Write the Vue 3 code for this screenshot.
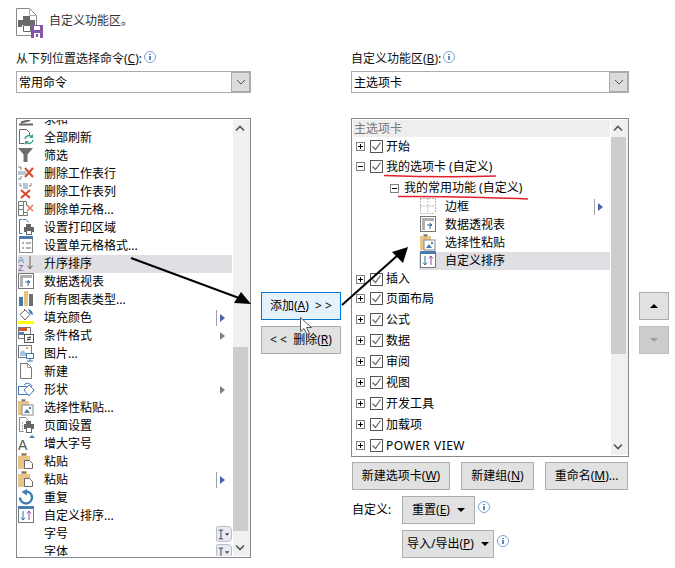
<template>
  <div class="page">
    <div class="header">
      <svg class="header-icon" width="27" height="30" viewBox="0 0 27 30">
        <path d="M.5.500h13l7 7v12M.5.500v27h15" fill="#fff" stroke="#8a8a8a" />
        <path d="M13.500.5v7h7" fill="none" stroke="#b0b0b0" />
        <path d="M7 8h7v4H7zM2 12h17v7h-3v-2H6v2H2z" fill="#6a6a6a" />
        <path d="M7.500 17.500h7v6h-7z" fill="#fff" stroke="#6a6a6a" />
        <rect x="15" y="17" width="12" height="13" fill="#8457ab" />
        <rect x="18" y="18" width="6" height="4" fill="#fff" />
        <rect x="18" y="25" width="6" height="5" fill="#fff" />
        <rect x="20" y="26" width="2" height="3" fill="#8457ab" />
      </svg>
      <span class="header-text">自定义功能区。</span>
    </div>

    <div class="columns">
      <div class="col-left">
        <div class="label">从下列位置选择命令(<u>C</u>):<i class="info"></i></div>
        <div class="select">
          <span>常用命令</span>
          <span class="select-btn"><svg width="10" height="6" viewBox="0 0 10 6"><path d="M1 1l4 4 4-4" fill="none" stroke="#555" /></svg></span>
        </div>
        <div class="list list-commands">
          <div class="list-body">
            <div class="commands">
              <div v-for="item in commands" :key="item.label + item.mark" class="cmd" :class="{ active: item.active }">
                <svg class="cmd-icon" width="18" height="18" viewBox="0 0 18 18" v-html="icons[item.icon]"></svg>
                <span class="cmd-text">{{ item.label }}</span>
                <span v-if="item.mark === 'split'" class="mark-split"><b class="tri blue"></b></span>
                <span v-if="item.mark === 'arrow'" class="mark-arrow"><b class="tri"></b></span>
                <span v-if="item.mark === 'combo'" class="mark-combo">
                  <svg width="16" height="15" viewBox="0 0 16 15">
                    <path d="M2 2.500h5M2 12.500h5M4.500 2.500v10" fill="none" stroke="#333" />
                    <path d="M9 6h5l-2.500 3z" fill="#444" />
                  </svg>
                </span>
              </div>
            </div>
          </div>
          <div class="scroll">
            <svg class="scroll-arrow" width="10" height="7" viewBox="0 0 10 7"><path d="M1 5.500l4-4 4 4" fill="none" stroke="#555" stroke-width="1.600" /></svg>
            <div class="scroll-track"><div class="thumb left-thumb"></div></div>
            <svg class="scroll-arrow" width="10" height="7" viewBox="0 0 10 7"><path d="M1 1.500l4 4 4-4" fill="none" stroke="#555" stroke-width="1.600" /></svg>
          </div>
        </div>
      </div>

      <div class="col-mid">
        <button class="btn btn-mid primary">添加(<u>A</u>)&nbsp;&nbsp;&gt; &gt;</button>
        <button class="btn btn-mid">&lt; &lt;&nbsp;&nbsp;删除(<u>R</u>)</button>
      </div>

      <div class="col-right">
        <div class="label">自定义功能区(<u>B</u>):<i class="info"></i></div>
        <div class="select">
          <span>主选项卡</span>
          <span class="select-btn"><svg width="10" height="6" viewBox="0 0 10 6"><path d="M1 1l4 4 4-4" fill="none" stroke="#555" /></svg></span>
        </div>
        <div class="list list-tabs">
          <div class="list-body">
            <div class="tree-head">主选项卡</div>
            <div v-for="node in tree" :key="node.label + node.h" class="node" :class="[node.kind, { active: node.active }]" :style="{ height: node.h + 'px' }">
              <template v-if="node.kind === 'tab'">
                <span class="expander" :class="{ open: node.open }"></span>
                <span class="check"><svg width="11" height="11" viewBox="0 0 11 11"><path d="M1.500 5.500l3 3 5-7" fill="none" stroke="#666" stroke-width="1.200" /></svg></span>
              </template>
              <span v-if="node.kind === 'group'" class="expander open"></span>
              <svg v-if="node.kind === 'leaf'" class="cmd-icon" width="18" height="18" viewBox="0 0 18 18" v-html="icons[node.icon]"></svg>
              <span class="node-text" :class="{ caps: node.caps }">{{ node.label }}</span>
              <span v-if="node.mark" class="mark-split"><b class="tri blue"></b></span>
            </div>
          </div>
          <div class="scroll">
            <svg class="scroll-arrow" width="10" height="7" viewBox="0 0 10 7"><path d="M1 5.500l4-4 4 4" fill="none" stroke="#555" stroke-width="1.600" /></svg>
            <div class="scroll-track"><div class="thumb right-thumb"></div></div>
            <svg class="scroll-arrow" width="10" height="7" viewBox="0 0 10 7"><path d="M1 1.500l4 4 4-4" fill="none" stroke="#555" stroke-width="1.600" /></svg>
          </div>
        </div>

        <div class="action-row">
          <button class="btn w-tab">新建选项卡(<u>W</u>)</button>
          <button class="btn w-group">新建组(<u>N</u>)</button>
          <button class="btn w-rename">重命名(<u>M</u>)...</button>
        </div>
        <div class="custom-row">
          <span class="custom-label">自定义:</span>
          <button class="btn w-reset">重置(<u>E</u>)<b class="caret"></b></button>
          <i class="info"></i>
        </div>
        <div class="custom-row second">
          <button class="btn w-import">导入/导出(<u>P</u>)<b class="caret"></b></button>
          <i class="info"></i>
        </div>
      </div>

      <div class="col-side">
        <button class="btn btn-side"><b class="tri-up"></b></button>
        <button class="btn btn-side disabled"><b class="tri-down"></b></button>
      </div>
    </div>

    <!-- annotations drawn over the dialog -->
    <svg class="overlay" width="675" height="568" viewBox="0 0 675 568">
      <path d="M384 175.500c30 1 80 1.500 112 .5" fill="none" stroke="#e0202c" stroke-width="1.500" />
      <path d="M398 196.500c40-.5 90 1 130 2.500" fill="none" stroke="#e0202c" stroke-width="1.500" />
      <path d="M131 258l108 40" fill="none" stroke="#000" stroke-width="2" />
      <path d="M251 304l-17-1 7-11z" fill="#000" />
      <path d="M342 305l56-50" fill="none" stroke="#000" stroke-width="2" />
      <path d="M408 247l-16 5 11 11z" fill="#000" />
      <path d="M300.500 317.500v14l3.500-3 3 6 2.500-1-3-6h5z" fill="#fff" stroke="#555" />
    </svg>
  </div>
</template>

<script setup>
const icons = {
  sum: '<path d="M4 12.500l9-2.500M2 14.500h14" fill="none" stroke="#666" stroke-width="2"/>',
  refresh: '<path d="M2.500 1.500h7l3 3v3M2.500 1.500v14h5" fill="#fff" stroke="#666"/><path d="M8 11a4 4 0 0 1 7-2M16 12a4 4 0 0 1-7 2" fill="none" stroke="#3fa08a" stroke-width="1.500"/><path d="M16 6v4h-4zM8 17v-4h4z" fill="#3fa08a"/>',
  filter: '<path d="M1 2h15l-5.500 6.500V16h-4V8.500z" fill="#6e6e6e"/>',
  delRow: '<path d="M1 3h3M1 15h3M4 3v3M4 12v3" fill="none" stroke="#888"/><rect x="1" y="7" width="8" height="4" fill="#b9c6d6"/><path d="M8 4l8 9M16 4l-8 9" stroke="#d6482c" stroke-width="2"/>',
  delCol: '<path d="M3 1v3M14 1v3M3 4h2M12 4h2" fill="none" stroke="#888"/><rect x="6" y="1" width="5" height="6" fill="#b9c6d6"/><path d="M4 8l9 8M13 8l-9 8" stroke="#d6482c" stroke-width="2"/>',
  delCell: '<path d="M1.500 1.500h5v4h-5zM6.500 1.500h3v4M1.500 5.500v4h5v-4M1.500 9.500v6h5v-6M6.500 12.500h4v3h-4" fill="none" stroke="#777"/><path d="M10 5l6 6M16 5l-6 6" stroke="#e0705a" stroke-width="1.500"/>',
  printArea: '<path d="M5 1.500H2.500v14H5M6 1.500h3l3 3" fill="#fff" stroke="#3f7cb5"/><path d="M9 6h5v3H9zM7 9h10v5h-2v-2H9v2H7z" fill="#666"/><rect x="9.500" y="12.500" width="5" height="4" fill="#fff" stroke="#666"/>',
  cellFormat: '<rect x="2.500" y=".5" width="13" height="16" fill="#fff" stroke="#888"/><rect x="2" y="0" width="14" height="3" fill="#4a7cae"/><path d="M5 7h2M9 7h5M5 12h2M9 12h5" stroke="#666"/>',
  sortAsc: '<text x="1" y="9" font-size="9" font-family="Liberation Sans" fill="#4a7cc0">A</text><text x="1" y="17" font-size="9" font-family="Liberation Sans" fill="#8a5ab0">Z</text><path d="M13 2v12M10.500 11.500L13 15l2.500-3.500" fill="none" stroke="#666"/>',
  pivot: '<rect x="1.500" y="1.500" width="15" height="15" fill="#fff" stroke="#777"/><rect x="3" y="3" width="12" height="3" fill="#b0b0b0"/><rect x="3" y="6" width="3" height="9" fill="#b0b0b0"/><path d="M8 10h5l-1.500-1.500M13 10l-1.500 1.500M11 8v6" fill="none" stroke="#2f6ea8"/>',
  chart: '<rect x="2" y="7" width="4" height="9" fill="#3e7cb1"/><rect x="7" y="1" width="4" height="15" fill="#e9c27e"/><rect x="12" y="4" width="4" height="12" fill="#6e6e6e"/>',
  fill: '<path d="M8 2l5 4.500-5 5.500-5-5.500z" fill="#fff" stroke="#666"/><path d="M7 1l1 1" stroke="#666"/><path d="M11 1c3 .5 5 2.500 5 6l-3-1.500z" fill="#3f7cb5"/><rect x="1" y="13" width="16" height="3" fill="#ffff00"/>',
  condFormat: '<rect x="1.500" y="1.500" width="12" height="11" fill="#fff" stroke="#777"/><rect x="2" y="2" width="8" height="3" fill="#d9552e"/><rect x="2" y="6" width="5" height="3" fill="#4a84bd"/><rect x="7.500" y="8.500" width="9" height="8" fill="#fff" stroke="#555"/><path d="M10 11.500h4M10 13.500h4M13.500 10l-3 5" stroke="#333" stroke-width=".8"/>',
  picture: '<rect x="1.500" y="1.500" width="13" height="12" fill="#fff" stroke="#777"/><path d="M3 12V8l3-2 3 3v3z" fill="#a8c4de"/><rect x="9" y="3" width="2" height="2" fill="#e8a23c"/><rect x="9.500" y="9.500" width="7" height="5" fill="#fff" stroke="#3f7cb5"/><path d="M13 15v2M10 17h6" stroke="#3f7cb5"/>',
  newDoc: '<path d="M3.500 1.500h7l4 4v11h-11z" fill="#fff" stroke="#777"/><path d="M10.500 1.500v4h4" fill="none" stroke="#999"/>',
  shape: '<rect x="1.500" y="6.500" width="10" height="8" fill="#fff" stroke="#3f7cb5"/><path d="M7 5a4.500 4.500 0 0 1 8 2" fill="none" stroke="#3f7cb5"/><path d="M12 5l5 5-5 6-5-6z" fill="#fff" stroke="#4a7cae"/>',
  pasteSpecial: '<path d="M1 3h3V1h5v2h3v14H1z" fill="#e8c488"/><path d="M5 1.500h3v2H5z" fill="#777"/><rect x="5" y="7" width="11" height="10" fill="#fff" stroke="#888"/><path d="M7 15l3-4 3 4zM12 9h2v2h-2z" fill="#4a7cae"/>',
  pageSetup: '<path d="M2.500 1.500h6l3 3M2.500 1.500v14h4" fill="#fff" stroke="#888"/><path d="M5 7h1M5 10h1M5 13h1" stroke="#555"/><path d="M9 5h5v3H9zM7 8h10v5h-2v-2H9v2H7z" fill="#666"/><rect x="9.500" y="11.500" width="5" height="5" fill="#fff" stroke="#666"/>',
  growFont: '<text x="1" y="16" font-size="14" font-family="Liberation Sans" fill="#555">A</text><path d="M12 4l3-3 3 3z" fill="#3f7cb5"/>',
  paste: '<path d="M1 4h3V1h6v3h3v13H1z" fill="#e8c488"/><path d="M5 1.500h4v2H5z" fill="#777"/><path d="M7.500 8.500h5l3 3v5h-8z" fill="#fff" stroke="#666"/>',
  redo: '<path d="M9 3.500A6 6 0 1 1 3 9.500" fill="none" stroke="#3f7cb5" stroke-width="2.400"/><path d="M4.500 4L10 1v6.500z" fill="#3f7cb5"/>',
  customSort: '<rect x="1.500" y=".5" width="15" height="16" fill="#fff" stroke="#777"/><rect x="1" y="0" width="16" height="3" fill="#4a7cae"/><path d="M6 5v9M4 11.500L6 14l2-2.500" fill="none" stroke="#2f6ea8"/><path d="M12 14V5M10 7.500L12 5l2 2.500" fill="none" stroke="#8a4ab0"/>',
  blank: '',
  border: '<path d="M1.500 1.500h15M1.500 16.500h15M1.500 1.500v15M16.500 1.500v15M9 1.500v15M1.500 9h15" fill="none" stroke="#777" stroke-dasharray="1 2"/>'
};

const commands = [
  { label: '求和', icon: 'sum' },
  { label: '全部刷新', icon: 'refresh' },
  { label: '筛选', icon: 'filter' },
  { label: '删除工作表行', icon: 'delRow' },
  { label: '删除工作表列', icon: 'delCol' },
  { label: '删除单元格...', icon: 'delCell' },
  { label: '设置打印区域', icon: 'printArea' },
  { label: '设置单元格格式...', icon: 'cellFormat' },
  { label: '升序排序', icon: 'sortAsc', active: true },
  { label: '数据透视表', icon: 'pivot' },
  { label: '所有图表类型...', icon: 'chart' },
  { label: '填充颜色', icon: 'fill', mark: 'split' },
  { label: '条件格式', icon: 'condFormat', mark: 'arrow' },
  { label: '图片...', icon: 'picture' },
  { label: '新建', icon: 'newDoc' },
  { label: '形状', icon: 'shape', mark: 'arrow' },
  { label: '选择性粘贴...', icon: 'pasteSpecial' },
  { label: '页面设置', icon: 'pageSetup' },
  { label: '增大字号', icon: 'growFont' },
  { label: '粘贴', icon: 'paste' },
  { label: '粘贴', icon: 'paste', mark: 'split' },
  { label: '重复', icon: 'redo' },
  { label: '自定义排序...', icon: 'customSort' },
  { label: '字号', icon: 'blank', mark: 'combo' },
  { label: '字体', icon: 'blank', mark: 'combo' }
];

const tree = [
  { kind: 'tab', label: '开始', h: 19 },
  { kind: 'tab', label: '我的选项卡 (自定义)', open: true, h: 21 },
  { kind: 'group', label: '我的常用功能 (自定义)', h: 21 },
  { kind: 'leaf', label: '边框', icon: 'border', h: 18, mark: true },
  { kind: 'leaf', label: '数据透视表', icon: 'pivot', h: 18 },
  { kind: 'leaf', label: '选择性粘贴', icon: 'pasteSpecial', h: 18 },
  { kind: 'leaf', label: '自定义排序', icon: 'customSort', h: 18, active: true },
  { kind: 'tab', label: '插入', h: 18 },
  { kind: 'tab', label: '页面布局', h: 21 },
  { kind: 'tab', label: '公式', h: 21 },
  { kind: 'tab', label: '数据', h: 21 },
  { kind: 'tab', label: '审阅', h: 21 },
  { kind: 'tab', label: '视图', h: 21 },
  { kind: 'tab', label: '开发工具', h: 21 },
  { kind: 'tab', label: '加载项', h: 21 },
  { kind: 'tab', label: 'POWER VIEW', h: 21, caps: true }
];
</script>

<style>
html,
body {
  margin: 0;
  background: #fff;
}
</style>

<style scoped>
.page {
  position: relative;
  width: 675px;
  height: 568px;
  overflow: hidden;
  background: #fff;
  color: #000;
  font-family: "Noto Sans", "Noto Sans CJK SC", sans-serif;
  font-size: 12px;
  line-height: 18px;
}

u {
  text-decoration: underline;
}

.header {
  display: flex;
  align-items: center;
  gap: 6px;
  height: 31px;
  padding: 7px 0 0 16px;
  color: #333;
}

.header-text {
  margin-top: -3px;
}

.columns {
  display: flex;
  margin-top: 10px;
  padding-left: 16px;
}

.col-left {
  width: 235px;
}

.col-right {
  width: 278px;
}

.col-mid {
  display: flex;
  flex-direction: column;
  gap: 6px;
  width: 100px;
  padding: 244px 0 0 10px;
  box-sizing: border-box;
}

.col-side {
  display: flex;
  flex-direction: column;
  gap: 6px;
  padding: 244px 0 0 10px;
}

.label {
  display: flex;
  align-items: center;
  height: 21px;
  margin-bottom: 2px;
  color: #111;
}

.info {
  display: inline-block;
  position: relative;
  width: 10px;
  height: 10px;
  margin: -4px 0 0 2px;
  border: 1px solid #7fa3d8;
  border-radius: 50%;
  background: #fff;
}

.info::after {
  content: "";
  position: absolute;
  left: 4px;
  top: 2px;
  width: 2px;
  height: 6px;
  background: linear-gradient(#5b86c8 0 1px, transparent 1px 2px, #5b86c8 2px);
}

.select {
  display: flex;
  justify-content: space-between;
  align-items: center;
  box-sizing: border-box;
  height: 22px;
  padding-left: 2px;
  border: 1px solid #ababab;
}

.select > span:first-child {
  padding-top: 1px;
}

.select-btn {
  display: flex;
  justify-content: center;
  align-items: center;
  box-sizing: border-box;
  width: 19px;
  height: 20px;
  border: 1px solid #ababab;
  background: #dcdcdc;
}

.list {
  display: flex;
  box-sizing: border-box;
  margin-top: 25px;
  padding: 1px 0 1px 1px;
  border: 1px solid #828790;
  overflow: hidden;
}

.list-commands {
  height: 440px;
}

.list-tabs {
  height: 339px;
}

.list-body {
  flex: 1;
  min-width: 0;
  overflow: hidden;
}

.commands {
  margin-top: -9px;
}

.cmd {
  display: flex;
  align-items: center;
  height: 18px;
  gap: 8px;
}

.cmd.active,
.node.active {
  background: #dfdfe4;
}

/* icons sit in the top left of their 18px cell */
.cmd-icon {
  flex: none;
  margin: 0 1px 2px -1px;
}

.cmd-text {
  flex: 1;
  white-space: nowrap;
}

.mark-split,
.mark-arrow {
  display: flex;
  align-items: center;
  height: 16px;
  margin-right: 7px;
  padding-left: 3px;
}

.mark-split {
  border-left: 1px solid #a0a0a8;
}

.tri {
  width: 0;
  height: 0;
  border-left: 5px solid #808080;
  border-top: 4px solid transparent;
  border-bottom: 4px solid transparent;
}

.tri.blue {
  border-left-color: #4a62a8;
}

.mark-combo {
  display: flex;
  align-items: center;
  box-sizing: border-box;
  width: 16px;
  height: 16px;
  border: 1px solid #b8bfd0;
  border-radius: 2px 4px 4px 2px;
  background: #e8eaf2;
}

.scroll {
  display: flex;
  flex-direction: column;
  flex: none;
  width: 17px;
  margin-left: 1px;
  background: #f0f0f0;
}

.scroll-arrow {
  flex: none;
  margin: 5px 0 5px 2px;
}

.scroll-track {
  flex: 1;
}

.thumb {
  width: 15px;
  background: #cdcdcd;
}

.left-thumb {
  height: 184px;
  margin-top: 210px;
  float: left;
}

.right-thumb {
  height: 217px;
}

.tree-head {
  height: 17px;
  padding-left: 1px;
  background: #eee;
  color: #777;
  font-size: 12px;
  line-height: 17px;
}

.node {
  display: flex;
  align-items: center;
  white-space: nowrap;
}

.node.tab {
  padding-left: 3px;
}

.node.group {
  padding: 1px 0 0 37px;
  box-sizing: border-box;
}

.node.leaf {
  margin-left: 66px;
  padding-left: 1px;
  gap: 7px;
}

.node-text {
  flex: 1;
}

.node-text.caps {
  letter-spacing: 0.5px;
}

.node.tab .node-text {
  margin-left: 3px;
}

.node.group .node-text {
  margin-left: 5px;
}

.node .mark-split {
  margin-right: 7px;
}

.expander {
  position: relative;
  flex: none;
  box-sizing: border-box;
  width: 9px;
  height: 9px;
  border: 1px solid #808080;
  background: linear-gradient(#000, #000) center / 5px 1px no-repeat, linear-gradient(#000, #000) center / 1px 5px no-repeat;
}

.expander.open {
  background: linear-gradient(#000, #000) center / 5px 1px no-repeat;
}

.check {
  display: flex;
  flex: none;
  justify-content: center;
  align-items: center;
  box-sizing: border-box;
  width: 13px;
  height: 13px;
  margin-left: 5px;
  border: 1px solid #555;
}

.btn {
  box-sizing: border-box;
  height: 28px;
  padding: 0;
  border: 1px solid #adadad;
  background: #e1e1e1;
  color: #000;
  font: inherit;
  white-space: nowrap;
}

.btn-mid {
  width: 80px;
}

.btn.primary {
  border-color: #0078d7;
  background: #e5f1fb;
}

.btn-side {
  display: flex;
  justify-content: center;
  align-items: center;
  width: 30px;
}

.btn-side.disabled {
  border-color: #bfbfbf;
  background: #ccc;
}

.tri-up {
  width: 0;
  height: 0;
  border-bottom: 4px solid #000;
  border-left: 4px solid transparent;
  border-right: 4px solid transparent;
}

.tri-down {
  width: 0;
  height: 0;
  border-top: 4px solid #a0a0a0;
  border-left: 4px solid transparent;
  border-right: 4px solid transparent;
}

.caret {
  display: inline-block;
  margin-left: 7px;
  vertical-align: 2px;
  border-top: 4px solid #000;
  border-left: 4px solid transparent;
  border-right: 4px solid transparent;
}

.action-row {
  display: flex;
  margin-top: 5px;
  padding-left: 1px;
}

.w-tab {
  width: 98px;
}

.w-group {
  width: 73px;
  margin-left: 11px;
}

.w-rename {
  width: 83px;
  margin-left: 11px;
}

.custom-row {
  display: flex;
  align-items: center;
  margin-top: 6px;
  padding-left: 1px;
}

.custom-row.second {
  padding-left: 51px;
}

.custom-label {
  width: 50px;
}

.custom-row .info {
  margin: -6px 0 0 3px;
}

.w-reset {
  width: 73px;
}

.w-import {
  width: 92px;
}

.overlay {
  position: absolute;
  left: 0;
  top: 0;
  pointer-events: none;
}
</style>
